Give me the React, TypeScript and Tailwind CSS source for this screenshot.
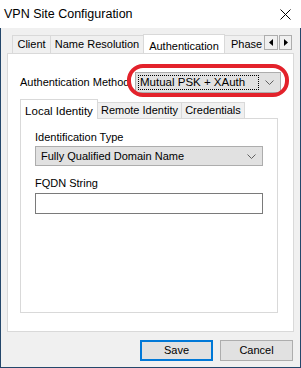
import React from "react";

const Chevron = () => (
  <svg width="9" height="5" viewBox="0 0 9 5" className="shrink-0">
    <path d="M0.5 0.5 L4.5 4.5 L8.5 0.5" fill="none" stroke="#606060" strokeWidth="1" />
  </svg>
);

export default function App() {
  const font = { fontFamily: '"Liberation Sans", Arial, sans-serif' };
  return (
    <div className="relative w-[301px] h-[368px] bg-[#f0f0f0] flex flex-col text-[11px] text-black" style={font}>
      {/* title bar */}
      <div className="h-[28px] bg-white flex items-center justify-between pl-[4px] pr-[10px] shrink-0">
        <span className="text-[12.5px] leading-none mt-[1px]">VPN Site Configuration</span>
        <svg width="11" height="11" viewBox="0 0 11 11">
          <path d="M0.5 0.5 L10.5 10.5 M10.5 0.5 L0.5 10.5" stroke="#000" strokeWidth="1" />
        </svg>
      </div>
      {/* body */}
      <div className="flex-1 flex flex-col border-l border-r border-b border-[#24476b] px-[6px]">
        {/* tabs */}
        <div className="flex items-end h-[25px] pt-[5px] pl-[5px] pr-[2px]">
          <div className="flex-1 flex items-end overflow-hidden h-[20px]">
            <div className="h-[18px] px-[4px] flex items-center border-t border-l border-[#d9d9d9] bg-[#f0f0f0] w-[38px] justify-center shrink-0">Client</div>
            <div className="h-[18px] flex items-center border-t border-l border-[#d9d9d9] bg-[#f0f0f0] w-[93px] justify-center shrink-0">Name Resolution</div>
            <div className="relative z-10 h-[20px] flex items-start pt-[3px] border-t border-l border-r border-[#d9d9d9] bg-white w-[82px] justify-center shrink-0 -mb-px">Authentication</div>
            <div className="h-[18px] flex items-center border-t border-r border-[#d9d9d9] bg-[#f0f0f0] w-[50px] pl-[6px] shrink-0">Phase 1</div>
          </div>
          <div className="flex self-start mt-[2px] gap-[1px]">
            <div className="w-[14px] h-[15px] border border-[#adadad] bg-[#f0f0f0] flex items-center justify-center">
              <svg width="4" height="7" viewBox="0 0 4 7"><path d="M4 0 L0 3.5 L4 7 Z" fill="#000" /></svg>
            </div>
            <div className="w-[13px] h-[15px] border border-[#adadad] bg-[#f0f0f0] flex items-center justify-center">
              <svg width="4" height="7" viewBox="0 0 4 7"><path d="M0 0 L4 3.5 L0 7 Z" fill="#000" /></svg>
            </div>
          </div>
        </div>
        {/* panel */}
        <div className="h-[279px] bg-white border border-[#d9d9d9] flex flex-col px-[12px]">
          <div className="flex items-center mt-[18px] h-[21px]">
            <span className="w-[115px]">Authentication Method</span>
            <div className="w-[146px] h-[21px] border border-[#adadad] bg-[#e1e1e1] flex items-center pl-[2px] pr-[6px]">
              <div className="border border-dotted border-[#000] h-[15px] flex-1 flex items-center pl-[1px] mr-[6px] text-[11.5px]">Mutual PSK + XAuth</div>
              <Chevron />
            </div>
          </div>
          {/* inner tabs */}
          <div className="mt-[5px] flex items-end h-[20px]">
            <div className="relative z-10 h-[20px] w-[78px] border-t border-l border-r border-[#d9d9d9] bg-white flex items-start justify-center pt-[3px] -mb-px text-[11.5px]">Local Identity</div>
            <div className="h-[16px] w-[84px] border-t border-r border-[#d9d9d9] bg-[#f0f0f0] flex items-center justify-center">Remote Identity</div>
            <div className="h-[16px] w-[63px] border-t border-r border-[#d9d9d9] bg-[#f0f0f0] flex items-center justify-center">Credentials</div>
          </div>
          <div className="h-[195px] w-[258px] border border-[#d9d9d9] flex flex-col px-[14px]">
            <div className="mt-[12px] leading-[13px]">Identification Type</div>
            <div className="mt-[2px] h-[20px] border border-[#adadad] bg-[#e1e1e1] flex items-center pl-[5px] pr-[6px] justify-between">
              <span>Fully Qualified Domain Name</span>
              <Chevron />
            </div>
            <div className="mt-[11px] leading-[13px]">FQDN String</div>
            <div className="mt-[3px] h-[21px] border border-[#7a7a7a] bg-white"></div>
          </div>
        </div>
        {/* buttons */}
        <div className="flex justify-end gap-[7px] mt-[8px] pr-[1px]">
          <button className="w-[73px] h-[21px] border-2 border-[#0078d7] bg-[#e1e1e1] flex items-center justify-center">Save</button>
          <button className="w-[73px] h-[21px] border border-[#adadad] bg-[#e1e1e1] flex items-center justify-center">Cancel</button>
        </div>
      </div>
      {/* red annotation */}
      <div className="absolute left-[127px] top-[64px] w-[162px] h-[33px] border-[4px] border-[#e3222b] rounded-[16px] pointer-events-none"></div>
    </div>
  );
}
